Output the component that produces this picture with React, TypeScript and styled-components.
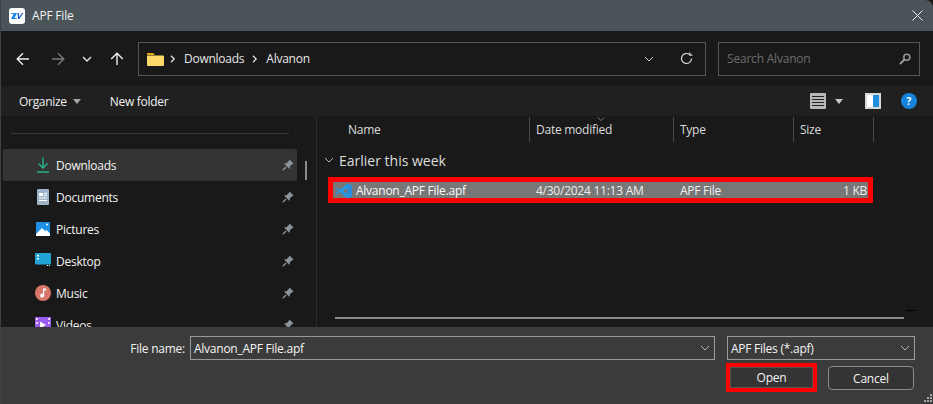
import React from 'react'
import styled, { createGlobalStyle } from 'styled-components'

const GlobalStyle = createGlobalStyle`
   html, body {
      margin: 0;
      padding: 0;
      background: #3b3b3b;
   }
   * {
      box-sizing: border-box;
   }
`

const Dialog = styled.div`
   width: 933px;
   height: 404px;
   display: flex;
   flex-direction: column;
   overflow: hidden;
   background: #191919;
   color: #f2f2f2;
   font-family: 'Open Sans', 'Noto Sans', sans-serif;
   font-size: 12px;
   border-left: 1px solid #3a4045;
`

const TitleBar = styled.div`
   height: 31px;
   flex: none;
   display: flex;
   align-items: center;
   padding: 0 10px 0 8px;
   gap: 7px;
   background: #4b5459;
   font-size: 12px;
   border-top-right-radius: 8px;
`

const TitleText = styled.span`
   flex: 1;
   letter-spacing: -0.2px;
`

const NavBar = styled.div`
   height: 55px;
   flex: none;
   display: flex;
   align-items: center;
   padding: 0 13px 0 15px;
`

const NavButton = styled.span<{ $width: number; $dim?: boolean }>`
   width: ${(p) => p.$width}px;
   display: flex;
   color: ${(p) => (p.$dim ? '#7a7a7a' : '#efefef')};
`

const AddressBox = styled.div`
   width: 568px;
   height: 34px;
   margin-left: 6px;
   display: flex;
   align-items: center;
   padding: 0 8px;
   border: 1px solid #565656;
`

const Crumb = styled.span`
   margin-right: 2px;
   letter-spacing: -0.25px;
   color: #e8e8e8;
`

const CrumbArrow = styled.span`
   display: flex;
   margin: 0 8px 0 6px;
`

const AddressEnd = styled.div`
   margin-left: auto;
   display: flex;
   align-items: center;
   gap: 26px;
   padding-right: 4px;
`

const SearchBox = styled.div`
   width: 202px;
   height: 34px;
   margin-left: 12px;
   display: flex;
   align-items: center;
   justify-content: space-between;
   padding: 0 8px;
   border: 1px solid #565656;
   color: #6d6d6d;
   letter-spacing: -0.2px;
`

const ToolBar = styled.div`
   height: 30px;
   flex: none;
   display: flex;
   align-items: center;
   padding: 0 16px 0 18px;
   background: #202020;
`

const ToolLabel = styled.span`
   letter-spacing: -0.3px;
   color: #f0f0f0;
`

const ToolCaret = styled.span`
   width: 0;
   height: 0;
   margin: 1px 29px 0 6px;
   border: 4px solid transparent;
   border-top: 5px solid #a5a5a5;
   border-bottom: 0;
`

const ToolEnd = styled.div`
   margin-left: auto;
   display: flex;
   align-items: center;
`

const ToolEndCaret = styled(ToolCaret)`
   margin: 0 22px 0 9px;
   border-top-color: #c8c8c8;
`

const PreviewToggle = styled.span`
   width: 16px;
   height: 16px;
   margin-right: 20px;
   display: flex;
   border: 2px solid #d8d8d8;
   background: linear-gradient(90deg, #ffffff 50%, #1f8fe0 50%);
`

const HelpBadge = styled.span`
   width: 16px;
   height: 16px;
   display: flex;
   align-items: center;
   justify-content: center;
   border-radius: 50%;
   background: #1684dc;
   color: #fff;
   font-size: 10px;
   font-weight: 700;
`

const Body = styled.div`
   flex: 1;
   min-height: 0;
   display: flex;
`

const Sidebar = styled.div`
   width: 302px;
   flex: none;
   padding: 0 6px 0 2px;
   overflow: hidden;
`

const SideRule = styled.div`
   height: 1px;
   margin: 17px 8px 15px 8px;
   background: #383838;
`

const SideRow = styled.div<{ $active?: boolean }>`
   height: 32px;
   display: flex;
   align-items: center;
   padding: 0 3px 0 32px;
   border-radius: 2px;
   background: ${(p) => (p.$active ? '#343434' : 'transparent')};
   color: #f2f2f2;
   letter-spacing: -0.25px;
`

const SideIcon = styled.span`
   width: 16px;
   height: 16px;
   margin-right: 5px;
   display: flex;
   flex: none;
`

const PinSlot = styled.span`
   margin-left: auto;
   display: flex;
`

const ScrollTrack = styled.div`
   width: 14px;
   flex: none;
   padding: 45px 0 0 2px;
   border-right: 1px solid #2b2b2b;
`

const ScrollThumb = styled.div`
   width: 2px;
   height: 19px;
   background: #8a8a8a;
`

const FilePane = styled.div`
   flex: 1;
   display: flex;
   flex-direction: column;
   min-width: 0;
   position: relative;
`

const HeaderRow = styled.div`
   height: 25px;
   margin-top: 1px;
   display: grid;
   grid-template-columns: 213px 144px 120px 80px;
   flex: none;
`

const HeaderCell = styled.div<{ $first?: boolean }>`
   display: flex;
   align-items: center;
   padding-left: ${(p) => (p.$first ? '31px' : '6px')};
   border-right: 1px solid #484848;
   color: #dcdcdc;
   letter-spacing: -0.25px;
`

const SortMark = styled.span`
   position: absolute;
   top: -1px;
   left: 280px;
   display: flex;
`

const GroupTitle = styled.div`
   height: 20px;
   margin: 8px 0 0 7px;
   display: flex;
   align-items: center;
   gap: 5px;
   font-size: 14px;
   color: #dedede;
`

const FileRow = styled.div`
   width: 545px;
   height: 26px;
   margin: 7px 0 0 11px;
   padding: 5px;
   flex: none;
   background: #ff0000;
`

const FileInner = styled.div`
   height: 100%;
   display: grid;
   grid-template-columns: 203px 144px 116px 71px;
   align-items: center;
   background: #777777;
   color: #fafafa;
   letter-spacing: -0.25px;
`

const FileName = styled.span`
   display: flex;
   align-items: center;
   gap: 4px;
   padding-left: 3px;
`

const FileCell = styled.span<{ $end?: boolean }>`
   color: #eeeeee;
   text-align: ${(p) => (p.$end ? 'right' : 'left')};
`

const HScroll = styled.div`
   position: absolute;
   left: 18px;
   bottom: 8px;
   width: 569px;
   height: 2px;
   background: #8a8a8a;
`

const CornerMark = styled.div`
   position: absolute;
   left: 589px;
   bottom: 16px;
   width: 10px;
   height: 1px;
   background: #000;
`

const Footer = styled.div`
   height: 77px;
   flex: none;
   padding: 9px 18px 0 0;
   background: #3b3b3b;
   display: flex;
   flex-direction: column;
   position: relative;
`

const FieldRow = styled.div`
   display: flex;
   align-items: center;
   height: 24px;
`

const FieldLabel = styled.span`
   width: 189px;
   padding-right: 5px;
   text-align: right;
   letter-spacing: -0.25px;
`

const Field = styled.div<{ $width: number }>`
   width: ${(p) => p.$width}px;
   height: 24px;
   margin-right: 12px;
   display: flex;
   align-items: center;
   justify-content: space-between;
   padding: 0 4px 0 3px;
   border: 1px solid #9a9a9a;
   color: #f5f5f5;
   letter-spacing: -0.25px;

   &:last-child {
      margin-right: 0;
   }
`

const ButtonRow = styled.div`
   display: flex;
   justify-content: flex-end;
   gap: 11px;
   margin-top: 3px;
   padding-right: 1px;
`

const OpenButton = styled.div`
   width: 91px;
   height: 29px;
   display: flex;
   align-items: center;
   justify-content: center;
   border: 4px solid #ff0000;
   background: #343434;
   box-shadow: inset 0 0 0 1px #555;
   letter-spacing: -0.2px;
`

const CancelButton = styled.div`
   width: 86px;
   height: 24px;
   margin-top: 3px;
   display: flex;
   align-items: center;
   justify-content: center;
   border: 1px solid #8a8a8a;
   border-radius: 4px;
   background: #343434;
   letter-spacing: -0.2px;
`

const GripMark = styled.svg`
   position: absolute;
   right: 1px;
   bottom: 2px;
`

const ArrowLeft = () => (
   <svg width="14" height="14" viewBox="0 0 14 14" fill="none" stroke="currentColor" strokeWidth="1.4">
      <path d="M13 7H1.5M7 1.2 1.2 7 7 12.8" />
   </svg>
)

const ArrowRight = () => (
   <svg width="14" height="14" viewBox="0 0 14 14" fill="none" stroke="currentColor" strokeWidth="1.4">
      <path d="M1 7h11.5M7 1.2 12.8 7 7 12.8" />
   </svg>
)

const ArrowUp = () => (
   <svg width="14" height="14" viewBox="0 0 14 14" fill="none" stroke="currentColor" strokeWidth="1.4">
      <path d="M7 13V1.5M1.2 7 7 1.2 12.8 7" />
   </svg>
)

const Chevron = ({ size = 10, color = '#b8b8b8', weight = 1 }: { size?: number; color?: string; weight?: number }) => (
   <svg width={size} height={size} viewBox="0 0 10 10" fill="none" stroke={color} strokeWidth={weight}>
      <path d="M1 3l4 4 4-4" />
   </svg>
)

const CrumbChevron = () => (
   <svg width="6" height="8" viewBox="0 0 6 8" fill="none" stroke="#e0e0e0" strokeWidth="1.3">
      <path d="M1 .8 4.2 4 1 7.2" />
   </svg>
)

const FolderIcon = () => (
   <svg width="17" height="14" viewBox="0 0 17 14">
      <path d="M0 2a1 1 0 0 1 1-1h5l2 2H0z" fill="#e6a817" />
      <path d="M0 3.500h16a1 1 0 0 1 1 1V13a1 1 0 0 1-1 1H1a1 1 0 0 1-1-1z" fill="#fbd96b" />
   </svg>
)

const RefreshIcon = () => (
   <svg width="13" height="13" viewBox="0 0 13 13" fill="none" stroke="#d8d8d8" strokeWidth="1.2">
      <path d="M11.500 6.500A5 5 0 1 1 9.500 2.500" />
      <path d="M9.800 .5v2.600h2.600" />
   </svg>
)

const SearchIcon = () => (
   <svg width="12" height="12" viewBox="0 0 12 12" fill="none" stroke="#9a9a9a" strokeWidth="1.5">
      <circle cx="7.800" cy="4.200" r="3" />
      <path d="M5.500 6.500 1 11" strokeWidth="2" />
   </svg>
)

const ViewIcon = () => (
   <svg width="16" height="16" viewBox="0 0 16 16">
      <rect width="16" height="16" rx="1" fill="#b8b8b8" />
      <path d="M2 3.500h12M2 6.500h12M2 9.500h12M2 12.500h12" stroke="#222" strokeWidth="1" />
   </svg>
)

const PinIcon = () => (
   <svg width="12" height="12" viewBox="0 0 12 12">
      <path d="M7.500 .5 11.500 4.500 10 5.200 7.800 7.500 7.500 10 2 4.500 4.500 4.200 6.800 2z" fill="#8c949b" />
      <path d="M4 8 .8 11.200" stroke="#8c949b" strokeWidth="1.3" />
   </svg>
)

const DownloadIcon = () => (
   <svg width="16" height="16" viewBox="0 0 16 16" fill="none" stroke="#27b08c" strokeWidth="1.4">
      <path d="M8 .5v10M3.500 6.500 8 11l4.500-4.500M2 15h12" />
   </svg>
)

const DocumentsIcon = () => (
   <svg width="16" height="16" viewBox="0 0 16 16">
      <rect x="2" width="12" height="16" rx="1" fill="#9eb2c9" />
      <path d="M4 4h4v3H4zM9 4h3v1H9zM9 6h3v1H9zM4 8.500h8v1H4zM4 11h8v1H4z" fill="#fff" />
   </svg>
)

const PicturesIcon = () => (
   <svg width="16" height="16" viewBox="0 0 16 16">
      <rect width="14" height="14" x="1" y="1" fill="#1e8fe6" />
      <path d="M1 13 7 7l3 3 1.500-1L15 12.500V15H1z" fill="#fff" />
      <circle cx="12" cy="3.500" r="1" fill="#fff" />
   </svg>
)

const DesktopIcon = () => (
   <svg width="16" height="13" viewBox="0 0 16 13">
      <rect width="16" height="11.500" rx="1" fill="#22a4d8" />
      <path d="M2 2h2v1.500H2zM2 5h2v1.500H2zM12 12h1v1h-1zM14 12h1v1h-1z" fill="#fff" />
   </svg>
)

const MusicIcon = () => (
   <svg width="16" height="16" viewBox="0 0 16 16">
      <circle cx="8" cy="8" r="8" fill="#d9766a" />
      <path d="M8 3.500h3V5.500H9.200V10.500A2 2 0 1 1 8 8.700z" fill="#fff" />
   </svg>
)

const VideosIcon = () => (
   <svg width="16" height="16" viewBox="0 0 16 16">
      <rect width="16" height="16" fill="#9a5cf0" />
      <path d="M5 4.500 11 8 5 11.500z" fill="#fff" />
      <path d="M1 1h2v2H1zM13 1h2v2h-2zM1 5h2v2H1zM13 5h2v2h-2z" fill="#e6d6ff" />
   </svg>
)

const VsCodeIcon = () => (
   <svg width="16" height="16" viewBox="0 0 16 16">
      <path d="M11.500.5 16 2.500v11l-4.500 2L4 8.800 1.500 11 0 10l3-2-3-2 1.500-1L4 7.200z" fill="#1f9cf0" />
      <path d="M11.500 4.500 7 8l4.500 3.500z" fill="#777" />
      <path d="M11.500.5 16 2.500v11l-4.500 2z" fill="#2a8fd8" />
   </svg>
)

const AppLogo = () => (
   <svg width="16" height="16" viewBox="0 0 16 16">
      <rect width="16" height="16" rx="3" fill="#ffffff" />
      <path d="M2.500 5H8L5.500 10H8l-.4 1H2l2.600-5H2.200z" fill="#1e88e5" />
      <path d="M8.500 5H10l.3 4L13 5h1.400l-4 6H9z" fill="#1c5fd0" />
   </svg>
)

const CloseIcon = () => (
   <svg width="11" height="11" viewBox="0 0 11 11" stroke="#f2f2f2" strokeWidth="1">
      <path d="M.5.5l10 10M10.500.5l-10 10" />
   </svg>
)

const places = [
   { label: 'Downloads', icon: <DownloadIcon />, active: true },
   { label: 'Documents', icon: <DocumentsIcon /> },
   { label: 'Pictures', icon: <PicturesIcon /> },
   { label: 'Desktop', icon: <DesktopIcon /> },
   { label: 'Music', icon: <MusicIcon /> },
   { label: 'Videos', icon: <VideosIcon /> },
]

export default function App() {
   return (
      <Dialog>
         <GlobalStyle />
         <TitleBar>
            <AppLogo />
            <TitleText>APF File</TitleText>
            <CloseIcon />
         </TitleBar>
         <NavBar>
            <NavButton $width={35}>
               <ArrowLeft />
            </NavButton>
            <NavButton $width={31} $dim>
               <ArrowRight />
            </NavButton>
            <NavButton $width={28}>
               <Chevron color="#e6e6e6" weight={1.4} />
            </NavButton>
            <NavButton $width={22}>
               <ArrowUp />
            </NavButton>
            <AddressBox>
               <FolderIcon />
               <CrumbArrow>
                  <CrumbChevron />
               </CrumbArrow>
               <Crumb>Downloads</Crumb>
               <CrumbArrow>
                  <CrumbChevron />
               </CrumbArrow>
               <Crumb>Alvanon</Crumb>
               <AddressEnd>
                  <Chevron color="#d0d0d0" />
                  <RefreshIcon />
               </AddressEnd>
            </AddressBox>
            <SearchBox>
               <span>Search Alvanon</span>
               <SearchIcon />
            </SearchBox>
         </NavBar>
         <ToolBar>
            <ToolLabel>Organize</ToolLabel>
            <ToolCaret />
            <ToolLabel>New folder</ToolLabel>
            <ToolEnd>
               <ViewIcon />
               <ToolEndCaret />
               <PreviewToggle />
               <HelpBadge>?</HelpBadge>
            </ToolEnd>
         </ToolBar>
         <Body>
            <Sidebar>
               <SideRule />
               {places.map((place) => (
                  <SideRow key={place.label} $active={place.active}>
                     <SideIcon>{place.icon}</SideIcon>
                     {place.label}
                     <PinSlot>
                        <PinIcon />
                     </PinSlot>
                  </SideRow>
               ))}
            </Sidebar>
            <ScrollTrack>
               <ScrollThumb />
            </ScrollTrack>
            <FilePane>
               <HeaderRow>
                  <HeaderCell $first>Name</HeaderCell>
                  <HeaderCell>Date modified</HeaderCell>
                  <HeaderCell>Type</HeaderCell>
                  <HeaderCell>Size</HeaderCell>
               </HeaderRow>
               <SortMark>
                  <Chevron size={8} color="#8a8a8a" />
               </SortMark>
               <GroupTitle>
                  <Chevron />
                  Earlier this week
               </GroupTitle>
               <FileRow>
                  <FileInner>
                     <FileName>
                        <VsCodeIcon />
                        Alvanon_APF File.apf
                     </FileName>
                     <FileCell>4/30/2024 11:13 AM</FileCell>
                     <FileCell>APF File</FileCell>
                     <FileCell $end>1 KB</FileCell>
                  </FileInner>
               </FileRow>
               <HScroll />
               <CornerMark />
            </FilePane>
         </Body>
         <Footer>
            <FieldRow>
               <FieldLabel>File name:</FieldLabel>
               <Field $width={525}>
                  Alvanon_APF File.apf
                  <Chevron />
               </Field>
               <Field $width={188}>
                  APF Files (*.apf)
                  <Chevron />
               </Field>
            </FieldRow>
            <ButtonRow>
               <OpenButton>Open</OpenButton>
               <CancelButton>Cancel</CancelButton>
            </ButtonRow>
            <GripMark width="8" height="8" viewBox="0 0 8 8" fill="#a8a8a8">
               <path d="M6 0h2v2H6zM3 3h2v2H3zM6 3h2v2H6zM0 6h2v2H0zM3 6h2v2H3zM6 6h2v2H6z" />
            </GripMark>
         </Footer>
      </Dialog>
   )
}
